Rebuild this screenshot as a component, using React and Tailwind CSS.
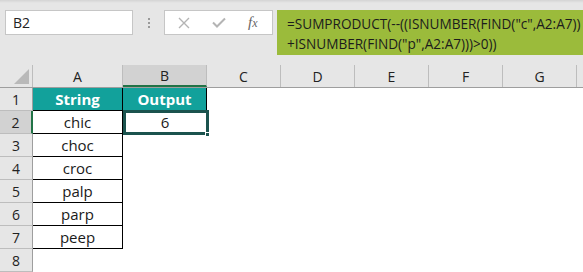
import React from "react";

const cols = [
  { l: "A", w: 90 },
  { l: "B", w: 84 },
  { l: "C", w: 74 },
  { l: "D", w: 74 },
  { l: "E", w: 74 },
  { l: "F", w: 74 },
  { l: "G", w: 74 },
];

const data = ["chic", "choc", "croc", "palp", "parp", "peep"];

export default function App() {
  return (
    <div
      className="w-[583px] h-[272px] overflow-hidden bg-white"
      style={{ fontFamily: '"Open Sans", "Noto Sans", sans-serif' }}
    >
      {/* formula bar area */}
      <div className="h-[65px] bg-[#e6e6e6] relative">
        <div className="h-[3px] bg-gradient-to-b from-[#d4d4d4] to-[#e6e6e6]" />
        <div className="flex items-start pt-[7px] pl-[5px]">
          <div className="w-[128px] shrink-0 h-[25px] bg-white border border-[#c6c6c6] flex items-center pl-[7px] text-[14px] text-[#222]">
            B2
          </div>
          <div className="w-[31px] shrink-0 h-[25px] flex flex-col items-center justify-center gap-[2px]">
            <div className="w-[2px] h-[2px] bg-[#9a9a9a]" />
            <div className="w-[2px] h-[2px] bg-[#9a9a9a]" />
            <div className="w-[2px] h-[2px] bg-[#9a9a9a]" />
          </div>
          <div className="w-[109px] shrink-0 h-[25px] bg-white border border-[#c6c6c6] flex items-center">
            <svg width="12" height="12" viewBox="0 0 12 12" className="ml-[13px]">
              <path d="M1 1 L11 11 M11 1 L1 11" stroke="#b4b4b4" strokeWidth="1.4" />
            </svg>
            <svg width="14" height="11" viewBox="0 0 14 11" className="ml-[22px]">
              <path d="M1 5.5 L5 9.5 L13 1.5" stroke="#b4b4b4" strokeWidth="2" fill="none" />
            </svg>
            <span
              className="ml-[22px] text-[15px] italic text-[#666] leading-none"
              style={{ fontFamily: '"Liberation Serif", serif' }}
            >
              f<span className="text-[12px]">x</span>
            </span>
          </div>
          <div className="ml-[4px] flex-1 min-w-0 overflow-hidden h-[45px] bg-[#9bbb3b] pl-[10px] pt-[4px] text-[13.6px] leading-[20px] text-[#1c1c1c] whitespace-nowrap">
            <div>=SUMPRODUCT(--((ISNUMBER(FIND("c",A2:A7))</div>
            <div>+ISNUMBER(FIND("p",A2:A7)))&gt;0))</div>
          </div>
        </div>
      </div>

      {/* grid */}
      <div className="relative">
        {/* column header */}
        <div className="flex h-[23px] bg-[#e6e6e6] border-b border-[#9e9e9e] box-border">
          <div className="w-[33px] shrink-0 border-r border-[#bdbdbd] flex items-end justify-end pr-[3px] pb-[3px]">
            <svg width="15" height="15" viewBox="0 0 15 15">
              <path d="M15 0 L15 15 L0 15 Z" fill="#b9b9b9" />
            </svg>
          </div>
          {cols.map((c) => (
            <div
              key={c.l}
              style={{ width: c.w }}
              className={
                "shrink-0 border-r border-[#bdbdbd] flex items-center justify-center text-[14px] text-[#222] " +
                (c.l === "B" ? "bg-[#d2d2d2] text-[#1e6b45] border-b-2 border-b-[#217346]" : "")
              }
            >
              {c.l}
            </div>
          ))}
          <div className="flex-1" />
        </div>

        {/* rows */}
        {Array.from({ length: 8 }).map((_, i) => {
          const r = i + 1;
          return (
            <div key={r} className="flex h-[23px]">
              <div
                className={
                  "w-[33px] shrink-0 border-r border-b border-[#bdbdbd] border-r-[#9e9e9e] flex items-center justify-center text-[14px] text-[#222] " +
                  (r === 2 ? "bg-[#d2d2d2] text-[#1e6b45] border-r-2 border-r-[#217346]" : "bg-[#e6e6e6]")
                }
              >
                {r}
              </div>
              {/* A */}
              <div
                className={
                  "w-[90px] shrink-0 flex items-center justify-center text-[15px] " +
                  (r === 1
                    ? "bg-[#12a19b] text-white font-bold border-r border-b border-black"
                    : r <= 7
                    ? "text-[#1a1a1a] border-r border-b border-black"
                    : "")
                }
              >
                {r === 1 ? "String" : r <= 7 ? data[r - 2] : ""}
              </div>
              {/* B */}
              <div
                className={
                  "w-[84px] shrink-0 flex items-center justify-center text-[15px] " +
                  (r === 1
                    ? "bg-[#12a19b] text-white font-bold border-r border-b border-black"
                    : r === 2
                    ? "text-[#1a1a1a]"
                    : "")
                }
              >
                {r === 1 ? "Output" : r === 2 ? "6" : ""}
              </div>
              <div className="flex-1" />
            </div>
          );
        })}

        {/* selection */}
        <div className="absolute left-[123px] top-[45px] w-[86px] h-[25px] border-[3px] border-[#1b534e]" />
        <div className="absolute left-[205px] top-[67px] w-[5px] h-[5px] bg-[#1b534e] border border-white" />
      </div>
    </div>
  );
}
